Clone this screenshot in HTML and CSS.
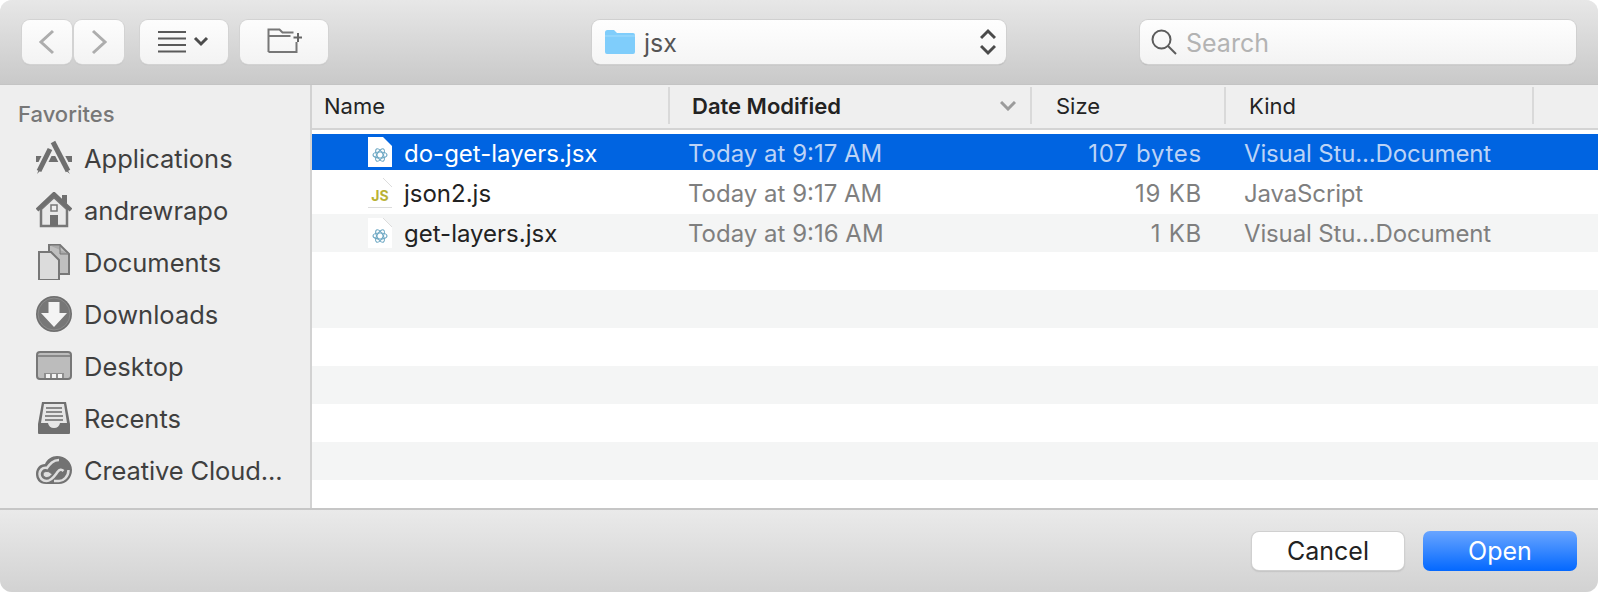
FILE: index.html
```html
<!DOCTYPE html>
<html lang="en">
<head>
<meta charset="utf-8">
<title>Open</title>
<link rel="stylesheet" href="styles.css">
</head>
<body>
<div class="window">
  <header class="toolbar">
    <div class="nav-group">
      <button class="btn btn-nav"><svg width="20" height="26" viewBox="0 0 20 26"><path d="M16 2 4 13l12 11" class="chev"/></svg></button>
      <button class="btn btn-nav"><svg width="20" height="26" viewBox="0 0 20 26"><path d="M4 2l12 11L4 24" class="chev"/></svg></button>
    </div>
    <button class="btn btn-view">
      <svg width="52" height="22" viewBox="0 0 52 22"><path d="M0 1h28M0 7.500h28M0 14h28M0 20.500h28" class="lines"/><path d="M37 7l6 6 6-6" class="caret"/></svg>
    </button>
    <button class="btn btn-new">
      <svg width="36" height="28" viewBox="0 0 36 28"><path d="M2.500 24V1.500h11l3 3h11M2.500 8h22M30.500 14v10h-28" class="outline"/><path d="M32 5v9M27.500 9.500h9" class="plus"/></svg>
    </button>
    <div class="popup">
      <svg width="30" height="24" viewBox="0 0 30 24"><path d="M0 2.500Q0 0 2.500 0h6.500l3 3h16Q30 3 30 5v17q0 2-2 2H2q-2 0-2-2z" class="folder"/><path d="M0 6h30" class="folder-line"/></svg>
      <span class="popup-label">jsx</span>
      <svg class="updown" width="16" height="28" viewBox="0 0 16 28"><path d="M1 10l7-7 7 7M1 18l7 7 7-7" class="updown-path"/></svg>
    </div>
    <div class="search">
      <svg width="26" height="26" viewBox="0 0 26 26"><circle cx="10.500" cy="10.500" r="9" class="glass"/><path d="M17 17l8 8" class="glass"/></svg>
      <span class="search-label">Search</span>
    </div>
  </header>

  <div class="main">
    <aside class="sidebar">
      <div class="side-title">Favorites</div>
      <div class="side-item">
        <svg class="side-icon" width="36" height="36" viewBox="0 0 36 36"><path d="M0 16h36v6H0z" class="g-fill"/><path d="M17 2l15 29" class="leg-gap"/><path d="M14 9 3 31" class="leg-gap"/><path d="M17 2l15 29" class="leg"/><path d="M14 9 3 31" class="leg"/><path d="M1 34l2-5 2 1zM34 34l-3-5-2 1z" class="g-fill"/></svg>
        <span>Applications</span>
      </div>
      <div class="side-item">
        <svg class="side-icon" width="36" height="36" viewBox="0 0 36 36"><path d="M5 17v17h26V17L18 5z" class="home-body"/><path d="M1 18 18 2l17 16" class="home-roof"/><path d="M26 3h5v9l-5-4z" class="g-fill"/><rect x="15" y="13" width="6" height="6" class="home-win"/><path d="M14 23h8v11h-8z" class="g-fill"/></svg>
        <span>andrewrapo</span>
      </div>
      <div class="side-item">
        <svg class="side-icon" width="36" height="36" viewBox="0 0 36 36"><path d="M13 1h11l9 9v20H13z" class="doc-back"/><path d="M13 1h11v9h9" class="doc-fold"/><path d="M3 8h12l8 8v20H3z" class="doc-front"/></svg>
        <span>Documents</span>
      </div>
      <div class="side-item">
        <svg class="side-icon" width="36" height="36" viewBox="0 0 36 36"><circle cx="18" cy="18" r="18" class="g-fill"/><circle cx="18" cy="18" r="16" class="dl-ring"/><path d="M12.500 6h11v11H31L18 31 5 17h7.500z" class="white-fill"/></svg>
        <span>Downloads</span>
      </div>
      <div class="side-item">
        <svg class="side-icon" width="36" height="36" viewBox="0 0 36 36"><rect x="1" y="4" width="34" height="27" rx="3" class="desk"/><path d="M2 8h32" class="desk-line"/><path d="M8 30v-5h20v5z" class="desk-dock"/><path d="M10 26h4v4h-4zM16 26h4v4h-4zM22 26h4v4h-4z" class="white-fill"/></svg>
        <span>Desktop</span>
      </div>
      <div class="side-item">
        <svg class="side-icon" width="36" height="36" viewBox="0 0 36 36"><path d="M6 2h24l4 22v9q0 1-1 1H3q-1 0-1-1v-9z" class="g-fill"/><path d="M8 4h20l3 19H24q-1 5-6 5t-6-5H5z" class="tray"/><path d="M10 8h16M10 12h16M9 16h18M9 20h18" class="tray-lines"/></svg>
        <span>Recents</span>
      </div>
      <div class="side-item">
        <svg class="side-icon" width="36" height="36" viewBox="0 0 36 36"><path d="M10 32C3 32 0 27 0 22 0 16 4 12 9 12 11 7 16 4 21 4c8 0 15 6 15 14s-6 14-13 14z" class="cc-outer"/><path d="M23 8C17 8 14 12 11 16 6 15 3.500 19 3.500 22c0 4 3 7 7 7 5 0 8-5 11-9 2-2.500 4-3 6-1" class="cc-inner"/><path d="M11 19.500c2.500 0 4 1.500 5 3-2 2.500-3.500 3-5.500 3-2 0-3.500-1.500-3.500-3.500 0-1.500 1.500-2.500 4-2.500z" class="cc-core"/><path d="M18 29h5c4 0 9.500-4 9.500-11" class="cc-inner"/></svg>
        <span class="side-cut">Creative Cloud...</span>
      </div>
    </aside>

    <section class="browser">
      <div class="head">
        <div class="hcell hname">Name</div>
        <div class="hcell hdate"><span>Date Modified</span>
          <svg width="16" height="10" viewBox="0 0 16 10"><path d="M1 1l7 7 7-7" class="sort"/></svg>
        </div>
        <div class="hcell hsize">Size</div>
        <div class="hcell hkind">Kind</div>
        <div class="hcell hrest"></div>
      </div>
      <div class="list">
        <div class="row row-selected">
          <div class="cname">
            <svg class="file" width="24" height="30" viewBox="0 0 24 30"><path d="M0 0h15l9 9v21H0z" class="file-bg"/><g class="atom"><ellipse cx="12" cy="18" rx="7" ry="3"/><ellipse cx="12" cy="18" rx="7" ry="3" transform="rotate(60 12 18)"/><ellipse cx="12" cy="18" rx="7" ry="3" transform="rotate(120 12 18)"/></g></svg>
            <span>do-get-layers.jsx</span>
          </div>
          <div class="cdate">Today at 9:17 AM</div>
          <div class="csize">107 bytes</div>
          <div class="ckind">Visual Stu...Document</div>
        </div>
        <div class="row row-plain">
          <div class="cname">
            <svg class="file" width="24" height="30" viewBox="0 0 24 30"><path d="M0 0h15l9 9v21H0z" class="file-bg"/><path d="M15 0l9 9M0 29.500h24" class="file-edge"/><text x="12" y="23" class="js">JS</text></svg>
            <span>json2.js</span>
          </div>
          <div class="cdate">Today at 9:17 AM</div>
          <div class="csize">19 KB</div>
          <div class="ckind">JavaScript</div>
        </div>
        <div class="row row-alt">
          <div class="cname">
            <svg class="file" width="24" height="30" viewBox="0 0 24 30"><path d="M0 0h15l9 9v21H0z" class="file-bg"/><path d="M15 0l9 9" class="file-edge"/><g class="atom"><ellipse cx="12" cy="18" rx="7" ry="3"/><ellipse cx="12" cy="18" rx="7" ry="3" transform="rotate(60 12 18)"/><ellipse cx="12" cy="18" rx="7" ry="3" transform="rotate(120 12 18)"/></g></svg>
            <span>get-layers.jsx</span>
          </div>
          <div class="cdate">Today at 9:16 AM</div>
          <div class="csize">1 KB</div>
          <div class="ckind">Visual Stu...Document</div>
        </div>
        <div class="stripe"></div>
        <div class="stripe stripe-alt"></div>
        <div class="stripe"></div>
        <div class="stripe stripe-alt"></div>
        <div class="stripe"></div>
        <div class="stripe stripe-alt"></div>
      </div>
    </section>
  </div>

  <footer class="footer">
    <button class="action action-cancel">Cancel</button>
    <button class="action action-open">Open</button>
  </footer>
</div>
</body>
</html>
```

FILE: styles.css
```css
* { box-sizing: border-box; }
html, body { margin: 0; padding: 0; background: #fff; }
body { width: 1598px; height: 592px; overflow: hidden; font-family: Inter, "Noto Sans", sans-serif; }
.window { width: 1598px; height: 592px; border-radius: 12px; overflow: hidden; display: flex; flex-direction: column; background: #eee; }

.toolbar { height: 85px; flex: none; display: flex; align-items: flex-start; padding: 20px 0 0 22px; background: linear-gradient(#e7e7e7, #c9c9c9); border-bottom: 1px solid #c4c4c4; }
.btn { height: 44px; padding: 0; border: 0; border-radius: 8px; display: flex; align-items: center; justify-content: center; background: linear-gradient(#fdfdfd, #f3f3f3); box-shadow: 0 0 0 1px #d3d3d3, 0 1px 1px #b5b5b5; }
.nav-group { display: flex; gap: 2px; }
.btn-nav { width: 50px; }
.btn-view { width: 88px; margin-left: 16px; }
.btn-new { width: 88px; margin-left: 12px; }
.chev { fill: none; stroke: #adadad; stroke-width: 3; }
.lines { fill: none; stroke: #5a5a5a; stroke-width: 2; }
.caret { fill: none; stroke: #4c4c4c; stroke-width: 3; }
.outline { fill: none; stroke: #777; stroke-width: 2; }
.plus { fill: none; stroke: #666; stroke-width: 2; }

.popup { width: 414px; height: 44px; margin-left: 264px; display: flex; align-items: center; padding: 0 10px 0 13px; border-radius: 8px; background: linear-gradient(#fefefe, #f5f5f5); box-shadow: 0 0 0 1px #d0d0d0, 0 1px 1px #999; }
.folder { fill: #7fcdfb; }
.folder-line { stroke: #a4dcfc; stroke-width: 1; }
.popup-label { margin: 2px 0 0 9px; font-size: 25px; color: #555; }
.updown { margin-left: auto; }
.updown-path { fill: none; stroke: #4a4a4a; stroke-width: 3; }

.search { width: 436px; height: 44px; margin-left: 134px; display: flex; align-items: center; padding-left: 11px; border-radius: 8px; background: linear-gradient(#fefefe, #f3f3f3); box-shadow: 0 0 0 1px #d0d0d0, 0 1px 1px #999; }
.glass { fill: none; stroke: #5c5c5c; stroke-width: 2; }
.search-label { margin: 2px 0 0 9px; font-size: 25px; color: #b3b3b3; }

.main { flex: 1; display: flex; min-height: 0; border-bottom: 2px solid #c6c6c6; }

.sidebar { width: 312px; flex: none; background: #eee; border-right: 2px solid #d2d2d2; padding: 16px 0 0; }
.side-title { height: 26px; line-height: 26px; padding-left: 18px; margin-bottom: 5px; font-size: 22px; font-weight: 500; color: #777; }
.side-item { height: 52px; display: flex; align-items: center; padding-left: 36px; gap: 12px; font-size: 25.500px; color: #3f3f3f; white-space: nowrap; }
.side-cut { letter-spacing: -.12px; }
.side-icon { flex: none; }
.g-fill { fill: #6f6f6f; }
.white-fill { fill: #f4f4f4; }
.leg-gap { fill: none; stroke: #eee; stroke-width: 9; }
.leg { fill: none; stroke: #6f6f6f; stroke-width: 5; }
.home-body { fill: #e9e9e9; stroke: #777; stroke-width: 2.500; }
.home-roof { fill: none; stroke: #6f6f6f; stroke-width: 4; }
.home-win { fill: #eee; stroke: #777; stroke-width: 1.500; }
.doc-back { fill: #bfbfbf; stroke: #777; stroke-width: 2; }
.doc-fold { fill: #a9a9a9; stroke: #777; stroke-width: 1; }
.doc-front { fill: #dcdcdc; stroke: #777; stroke-width: 2; }
.dl-ring { fill: #777; stroke: #8c8c8c; stroke-width: 1; }
.desk { fill: #bcbcbc; stroke: #777; stroke-width: 2; }
.desk-line { stroke: #777; stroke-width: 1.500; }
.desk-dock { fill: #8e8e8e; }
.tray { fill: #e6e6e6; }
.tray-lines { fill: none; stroke: #8a8a8a; stroke-width: 2; }
.cc-outer { fill: #727272; }
.cc-inner { fill: none; stroke: #dedede; stroke-width: 2.500; }
.cc-core { fill: #dedede; stroke: #727272; stroke-width: 1; }

.browser { flex: 1; min-width: 0; display: flex; flex-direction: column; background: #fff; }
.head { height: 45px; flex: none; display: grid; grid-template-columns: 358px 362px 194px 308px 1fr; background: #efefef; border-bottom: 2px solid #d4d4d4; font-size: 22px; color: #232323; }
.hcell { display: flex; align-items: center; margin: 2px 0 4px; border-right: 2px solid #d9d9d9; }
.hrest { border-right: 0; }
.hname { padding-left: 12px; }
.hdate { padding: 0 14px 0 22px; justify-content: space-between; font-weight: 600; }
.hsize { padding-left: 24px; }
.hkind { padding-left: 23px; }
.sort { fill: none; stroke: #9b9b9b; stroke-width: 3; }

.list { flex: 1; padding-top: 2px; min-height: 0; overflow: hidden; }
.row { display: grid; grid-template-columns: 358px 362px 194px 308px; align-items: center; font-size: 24px; color: #7f7f7f; white-space: nowrap; }
.row-selected { height: 36px; margin-top: 2px; margin-bottom: 2px; background: #0064e1; color: #bcd3f6; }
.row-plain { height: 42px; background: #fff; }
.row-alt { height: 38px; background: #f4f5f5; }
.cname { display: flex; align-items: center; gap: 12px; padding-left: 56px; color: #222; }
.row-selected .cname { color: #fff; }
.row-selected .cname span, .row-selected .cdate, .row-selected .csize, .row-selected .ckind { margin-top: 2px; }
.cdate { padding-left: 18px; }
.csize { padding-right: 24px; text-align: right; letter-spacing: .75px; }
.ckind { padding-left: 18px; letter-spacing: -.15px; }
.file { flex: none; }
.file-bg { fill: #fff; }
.file-edge { fill: none; stroke: #dcdcdc; stroke-width: 1; }
.atom { fill: none; stroke: #6fa9c4; stroke-width: 1.200; }
.js { font-size: 14px; font-weight: 700; fill: #b9b234; text-anchor: middle; }

.stripe { height: 38px; background: #fff; }
.stripe-alt { background: #f4f5f5; }

.footer { flex: none; height: 82px; display: flex; justify-content: flex-end; align-items: center; padding: 0 21px 0 0; gap: 19px; background: linear-gradient(#eaeaea, #d2d2d2); }
.action { width: 152px; height: 38px; padding: 0; border: 0; border-radius: 7px; font: 400 25px Inter, sans-serif; }
.action-cancel { background: #fff; color: #222; box-shadow: 0 0 0 1px #d0d0d0, 0 1px 2px #999; }
.action-open { width: 154px; height: 40px; color: #fff; background: linear-gradient(#69a5ff, #0368ff); }
```
